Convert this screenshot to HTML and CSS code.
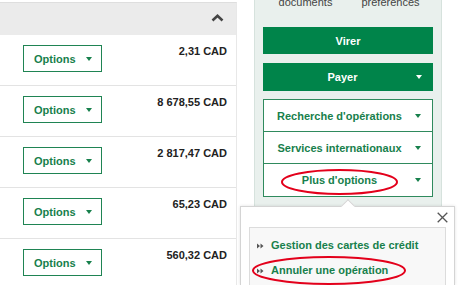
FILE: index.html
```html
<!DOCTYPE html>
<html lang="fr">
<head>
    <meta charset="UTF-8">
    <title>Comptes</title>
    <link rel="stylesheet" href="styles.css">
</head>
<body>

    <div class="page">
        <div class="accounts">
            <div class="accounts-head">
                <svg class="chevron" width="13" height="8" viewBox="0 0 13 8">
                    <path d="M1.5 6.5 L6.5 1.8 L11.5 6.5" fill="none" stroke="#444" stroke-width="2.6"/>
                </svg>
            </div>
            <div class="row">
                <button class="options">Options <span class="caret"></span></button>
                <span class="amount">2,31 CAD</span>
            </div>
            <div class="row">
                <button class="options">Options <span class="caret"></span></button>
                <span class="amount">8 678,55 CAD</span>
            </div>
            <div class="row">
                <button class="options">Options <span class="caret"></span></button>
                <span class="amount">2 817,47 CAD</span>
            </div>
            <div class="row">
                <button class="options">Options <span class="caret"></span></button>
                <span class="amount">65,23 CAD</span>
            </div>
            <div class="row">
                <button class="options">Options <span class="caret"></span></button>
                <span class="amount">560,32 CAD</span>
            </div>
        </div>

        <div class="panel">
            <div class="quick">
                <span>documents</span>
                <span>préférences</span>
            </div>
            <button class="action">Virer</button>
            <button class="action with-caret">Payer <span class="caret white"></span></button>
            <div class="menu">
                <div class="menu-item">Recherche d'opérations <span class="caret"></span></div>
                <div class="menu-item">Services internationaux <span class="caret"></span></div>
                <div class="menu-item">Plus d'options <span class="caret"></span></div>
            </div>
        </div>
    </div>

    <div class="popup">
        <svg class="close" width="11" height="11" viewBox="0 0 11 11">
            <path d="M0.7 0.7 L10.3 10.3 M10.3 0.7 L0.7 10.3" stroke="#555" stroke-width="1.3"/>
        </svg>
        <ul class="popup-list">
            <li>
                <svg class="bullet" width="7" height="6" viewBox="0 0 7 6"><path d="M0 0.5 L3 3 L0 5.5Z M3.5 0.5 L6.5 3 L3.5 5.5Z" fill="#555"/></svg>
                Gestion des cartes de crédit
            </li>
            <li>
                <svg class="bullet" width="7" height="6" viewBox="0 0 7 6"><path d="M0 0.5 L3 3 L0 5.5Z M3.5 0.5 L6.5 3 L3.5 5.5Z" fill="#555"/></svg>
                Annuler une opération
            </li>
        </ul>
    </div>

    <!-- annotation marks over the screenshot -->
    <svg class="marks" width="460" height="285" viewBox="0 0 460 285">
        <ellipse cx="339.5" cy="182" rx="57.5" ry="12" fill="none" stroke="#e3001b" stroke-width="2"/>
        <ellipse cx="329" cy="270.5" rx="76" ry="13.5" fill="none" stroke="#e3001b" stroke-width="2"/>
    </svg>

</body>
</html>
```

FILE: styles.css
```css
body {
    margin: 0;
    width: 460px;
    height: 285px;
    overflow: hidden;
    position: relative;
    font-family: 'Liberation Sans', Arial, sans-serif;
    font-size: 11px;
    background: #fff;
    color: #222;
}

.page {
    display: flex;
    align-items: flex-start;
    gap: 17px;
}

/* accounts list */
.accounts {
    width: 236px;
    margin-top: 2px;
    border-top: 1px solid #dedede;
    border-right: 1px solid #e8e8e8;
}

.accounts-head {
    height: 32px;
    background: #ebebeb;
    display: flex;
    justify-content: flex-end;
    align-items: center;
    padding-right: 12px;
}

.chevron {
    margin-top: -3px;
}

.row {
    height: 51px;
    box-sizing: border-box;
    border-bottom: 1px solid #e3e3e3;
    display: flex;
    justify-content: space-between;
    align-items: flex-start;
    padding: 10px 9px 0 23px;
}

.row:last-child {
    height: 46px;
    border-bottom: none;
}

.options {
    width: 79px;
    height: 27px;
    box-sizing: border-box;
    border: 1px solid #1f8453;
    background: #fff;
    color: #17804c;
    font-family: inherit;
    font-size: 11px;
    font-weight: bold;
    display: flex;
    align-items: center;
    gap: 10px;
    padding: 0 0 0 10px;
}

.amount {
    font-weight: bold;
    line-height: 13px;
    color: #222;
}

.caret {
    display: inline-block;
    width: 0;
    height: 0;
    border-left: 3.5px solid transparent;
    border-right: 3.5px solid transparent;
    border-top: 4px solid #17804c;
}

.caret.white {
    border-top-color: #fff;
}

/* side panel */
.panel {
    width: 188px;
    box-sizing: border-box;
    margin-top: -13px;
    padding: 8px 8px 12px;
    background: #e9f0ed;
    border: 1px solid #d6e2dd;
}

.quick {
    display: grid;
    grid-template-columns: 1fr 1fr;
    text-align: center;
    line-height: 13px;
    color: #444;
    margin-bottom: 18px;
}

.action {
    display: block;
    width: 100%;
    height: 27px;
    margin-bottom: 9px;
    border: none;
    background: #00844a;
    color: #fff;
    font-family: inherit;
    font-size: 11px;
    font-weight: bold;
}

.action.with-caret {
    height: 28px;
    margin-bottom: 8px;
    display: flex;
    align-items: center;
    justify-content: center;
    position: relative;
    padding-right: 17px;
}

.action.with-caret .caret {
    position: absolute;
    right: 11px;
    top: 12px;
}

.menu {
    background: #fff;
    border: 1px solid #2f8a5d;
}

.menu-item {
    height: 32px;
    box-sizing: border-box;
    border-bottom: 1px solid #2f8a5d;
    display: flex;
    align-items: center;
    justify-content: center;
    padding-right: 17px;
    position: relative;
    color: #17804c;
    font-weight: bold;
}

.menu-item:last-child {
    border-bottom: none;
}

.menu-item .caret {
    position: absolute;
    right: 11px;
    top: 14px;
}

/* popup menu */
.popup {
    position: absolute;
    left: 240px;
    top: 206px;
    width: 215px;
    height: 79px;
    box-sizing: border-box;
    background: #fff;
    border: 1px solid #d4d4d4;
    border-bottom: none;
    box-shadow: 0 0 3px rgba(0, 0, 0, 0.12);
    padding: 20px 8px 0 8px;
}

.popup::before {
    content: '';
    position: absolute;
    left: 102px;
    top: -6px;
    width: 9px;
    height: 9px;
    background: #fff;
    border-left: 1px solid #d4d4d4;
    border-top: 1px solid #d4d4d4;
    transform: rotate(45deg);
}

.close {
    position: absolute;
    right: 6px;
    top: 5px;
}

.popup-list {
    list-style: none;
    margin: 0;
    height: 58px;
    box-sizing: border-box;
    padding: 5px 0 0 7px;
    background: #f8f8f8;
    border: 1px solid #dcdcdc;
    border-bottom: none;
}

.popup-list li {
    line-height: 25px;
    color: #17804c;
    font-weight: bold;
    display: flex;
    align-items: center;
    gap: 7px;
}

.marks {
    position: absolute;
    left: 0;
    top: 0;
    pointer-events: none;
}
```
